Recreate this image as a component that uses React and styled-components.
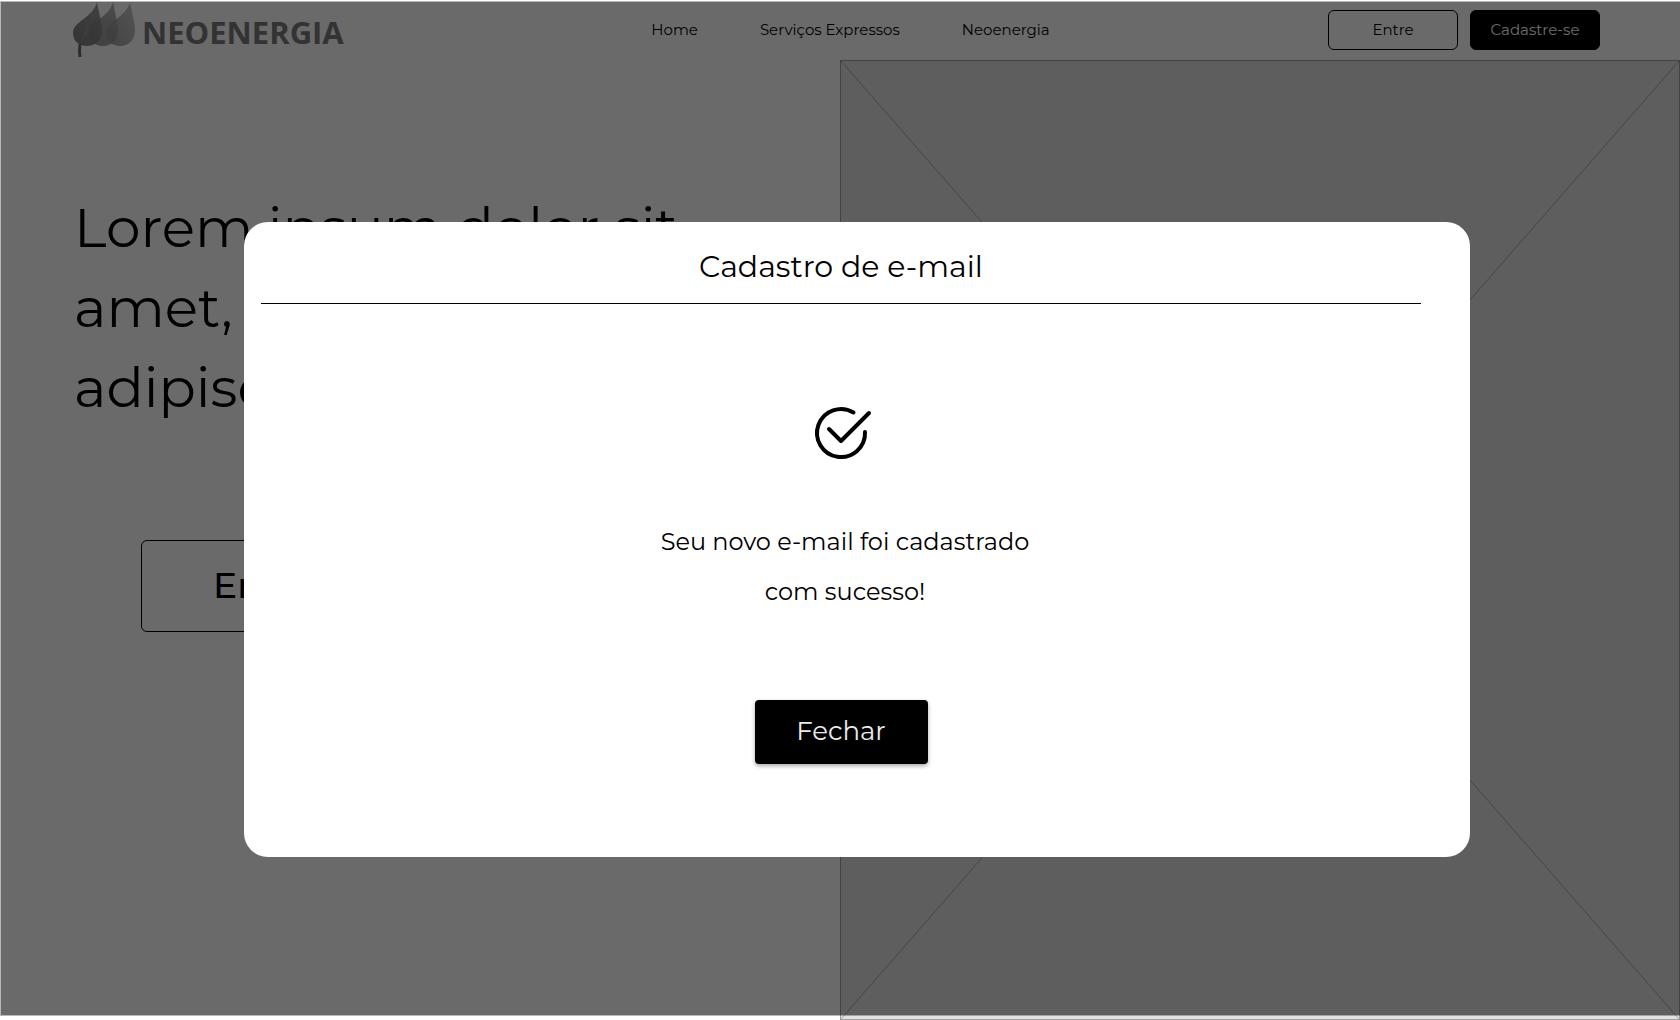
import React from "react";
import styled, { createGlobalStyle } from "styled-components";

const GlobalStyle = createGlobalStyle`
  *, *::before, *::after { box-sizing: border-box; }
  body {
    margin: 0;
    background: #fff;
    color: #000;
    font-family: Montserrat, Inter, "Open Sans", sans-serif;
  }
  h1, h2, p { margin: 0; font-weight: 400; }
`;

const Page = styled.div`
  display: flex;
  flex-direction: column;
  min-height: 100vh;
`;

const Header = styled.header`
  display: grid;
  grid-template-columns: 1fr auto 1fr;
  align-items: center;
  height: 60px;
  padding: 0 80px 0 73px;
`;

const Brand = styled.a`
  display: flex;
  align-items: flex-end;
  gap: 5px;
  color: #7c7c7c;
  font: 700 31px/52px "Open Sans", sans-serif;
  text-decoration: none;
`;

const Nav = styled.nav`
  display: flex;
  gap: 62px;
  padding-left: 28px;
`;

const NavLink = styled.a`
  color: #000;
  font-size: 15px;
  line-height: 20px;
  text-decoration: none;
`;

const Actions = styled.div`
  display: flex;
  justify-content: flex-end;
  gap: 12px;
`;

const Button = styled.button`
  height: ${(p) => (p.$large ? "92px" : "40px")};
  width: ${(p) => (p.$large ? "244px" : "130px")};
  padding: 0 0 2px;
  border: 1px solid #000;
  border-radius: 6px;
  background: ${(p) => (p.$filled ? "#000" : "transparent")};
  color: ${(p) => (p.$filled ? "#fff" : "#000")};
  font-family: inherit;
  font-size: ${(p) => (p.$large ? "36px" : "15px")};
  font-weight: ${(p) => (p.$large ? 500 : 400)};
`;

const Hero = styled.main`
  display: grid;
  grid-template-columns: 1fr 1fr;
  flex: 1;
`;

const Intro = styled.section`
  display: flex;
  flex-direction: column;
  align-items: flex-start;
  gap: 112px;
  padding: 128px 140px 0 74px;

  ${Button} { margin-left: 67px; }
`;

const Headline = styled.h1`
  font-size: 55px;
  line-height: 80px;
`;

const Placeholder = styled.div`
  display: flex;
  border: 1px solid #9f9f9f;
  background: #e2e2e2;

  svg { flex: 1; width: 100%; height: 100%; }
`;

const Overlay = styled.div`
  position: fixed;
  inset: 1px 0 4px 0;
  padding: 220px 210px 0 243px;
  border: solid rgba(0, 0, 0, 0.28);
  border-width: 1px 0 1px 1px;
  background: rgba(0, 0, 0, 0.585) padding-box;
`;

const Dialog = styled.section`
  display: flex;
  flex-direction: column;
  align-items: center;
  padding: 0 49px 93px 17px;
  border-radius: 24px;
  background: #fff;
`;

const DialogTitle = styled.h2`
  align-self: stretch;
  padding: 25px 0 16px;
  border-bottom: 1px solid #000;
  font-size: 30px;
  line-height: 40px;
  text-align: center;
`;

const CheckIcon = styled.svg`
  width: 52px;
  height: 54px;
  margin: 102px 0 57px;
  overflow: visible;
`;

const Message = styled.p`
  width: 400px;
  margin: 0 0 83px 8px;
  font-size: 24px;
  line-height: 50px;
  text-align: center;
`;

const CloseButton = styled.button`
  width: 173px;
  height: 64px;
  padding: 0 0 2px;
  border: 0;
  border-radius: 4px;
  background: #000;
  box-shadow: 0 2px 4px rgba(0, 0, 0, 0.35);
  color: #ebebeb;
  font-family: inherit;
  font-size: 26px;
`;

const leaf = "M24 0C26 12 29 20 29 29C29 38 22 44 14 44C6 44 0 39 0 31C0 19 20 16 24 0Z";

function Leaves() {
  return (
    <svg width="64" height="56" viewBox="0 0 64 56" aria-hidden="true">
      <defs>
        <linearGradient id="dark" x1="0" y1="1" x2="1" y2="0">
          <stop offset="0" stopColor="#717171" />
          <stop offset="1" stopColor="#949494" />
        </linearGradient>
        <linearGradient id="mid" x1="0" y1="1" x2="1" y2="0">
          <stop offset="0" stopColor="#858585" />
          <stop offset="1" stopColor="#a8a8a8" />
        </linearGradient>
        <linearGradient id="light" x1="0" y1="1" x2="1" y2="0">
          <stop offset="0" stopColor="#a2a2a2" />
          <stop offset="1" stopColor="#c8c8c8" />
        </linearGradient>
      </defs>
      <path d={leaf} transform="translate(33)" fill="url(#light)" />
      <path d={leaf} transform="translate(16)" fill="url(#mid)" opacity="0.85" />
      <path d={leaf} fill="url(#dark)" opacity="0.92" />
      <path d="M24 4C21 18 12 26 8 41M14 29L13 20M12 32L22 24" fill="none" stroke="#999" strokeWidth="1" />
      <path d="M7 42Q6 49 7 55" fill="none" stroke="#6e6e6e" strokeWidth="3" />
    </svg>
  );
}

export default function App() {
  return (
    <>
      <GlobalStyle />
      <Page>
        <Header>
          <Brand href="#"><Leaves />NEOENERGIA</Brand>
          <Nav>
            <NavLink href="#">Home</NavLink>
            <NavLink href="#">Serviços Expressos</NavLink>
            <NavLink href="#">Neoenergia</NavLink>
          </Nav>
          <Actions>
            <Button>Entre</Button>
            <Button $filled>Cadastre-se</Button>
          </Actions>
        </Header>
        <Hero>
          <Intro>
            <Headline>Lorem ipsum dolor sit amet, consectetur adipiscing elit</Headline>
            <Button $large>Entre</Button>
          </Intro>
          <Placeholder>
            <svg viewBox="0 0 100 100" preserveAspectRatio="none" aria-hidden="true">
              <path d="M0 0L100 100M100 0L0 100" stroke="#aaa" vectorEffect="non-scaling-stroke" />
            </svg>
          </Placeholder>
        </Hero>
      </Page>
      <Overlay>
        <Dialog role="dialog" aria-modal="true" aria-labelledby="dialog-title">
          <DialogTitle id="dialog-title">Cadastro de e-mail</DialogTitle>
          <CheckIcon viewBox="0 0 52 54" fill="none" stroke="#000" strokeWidth="4" strokeLinecap="round" strokeLinejoin="round" aria-hidden="true">
            <path d="M50 26A24 24 0 1 1 38.5 6.5" />
            <path d="M14 23L26 35L54 7" />
          </CheckIcon>
          <Message>Seu novo e-mail foi cadastrado com sucesso!</Message>
          <CloseButton>Fechar</CloseButton>
        </Dialog>
      </Overlay>
    </>
  );
}
